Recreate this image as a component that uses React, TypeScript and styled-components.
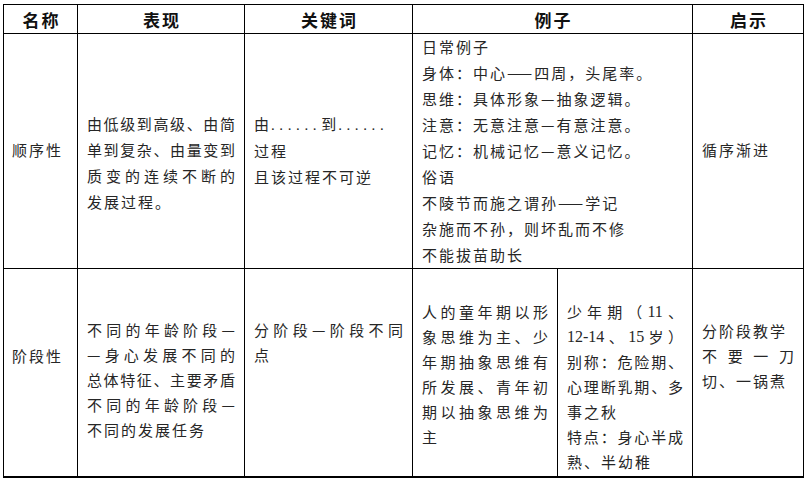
import React from "react";
import styled, { createGlobalStyle } from "styled-components";

const Global = createGlobalStyle`
  html, body { margin: 0; padding: 0; background: #fff; }
  body { font-family: "Noto Sans CJK SC", "Noto Sans", sans-serif; }
`;

const Sheet = styled.div`
  display: grid;
  grid-template-columns: 73px 166px 167px 144px 134px 110px;
  grid-template-rows: 28px 234px 207px;
  gap: 1px;
  background: #000;
  padding: 1px 1px 2px 1px;
  width: max-content;
  margin: 4px 0 0 3px;
`;

const HeadCell = styled.div<{ $span?: number }>`
  background: #fff;
  grid-column: span ${(p) => p.$span ?? 1};
  display: flex;
  align-items: center;
  justify-content: center;
  font-size: 17px;
  font-weight: 700;
  letter-spacing: 2px;
  padding-left: 2px;
  color: #111;
`;

const Cell = styled.div<{ $span?: number; $pt: number; $pl?: number; $lh: number }>`
  background: #fff;
  grid-column: span ${(p) => p.$span ?? 1};
  padding: ${(p) => p.$pt}px 9px 0 ${(p) => p.$pl ?? 9}px;
  font-size: 15px;
  line-height: ${(p) => p.$lh}px;
  color: #262626;
  overflow: hidden;
`;

const Line = styled.div`
  white-space: nowrap;
  letter-spacing: 2px;
`;

const JLine = styled.div`
  display: flex;
  justify-content: space-between;
  white-space: nowrap;
`;

const Latin = styled.span`
  font-family: "Liberation Serif", serif;
  font-size: 16px;
`;

const Dots = styled.span`
  font-family: "Liberation Serif", serif;
  letter-spacing: 4.6px;
`;

const tokens = (s: string) => s.match(/[0-9\-]+|\s+|./gu) ?? [];

const J = ({ t }: { t: string }) => (
  <JLine>
    {tokens(t)
      .filter((x) => x.trim() !== "")
      .map((x, i) =>
        /[0-9]/.test(x) ? <Latin key={i}>{x}</Latin> : <span key={i}>{x}</span>
      )}
  </JLine>
);

const L = ({ t }: { t: string }) => <Line>{t}</Line>;

export default function App() {
  return (
    <>
      <Global />
      <Sheet>
        <HeadCell>名称</HeadCell>
        <HeadCell>表现</HeadCell>
        <HeadCell>关键词</HeadCell>
        <HeadCell $span={2}>例子</HeadCell>
        <HeadCell>启示</HeadCell>

        <Cell $pt={103} $pl={8} $lh={26}>
          <L t="顺序性" />
        </Cell>
        <Cell $pt={77} $lh={26}>
          <J t="由低级到高级、由简" />
          <J t="单到复杂、由量变到" />
          <J t="质变的连续不断的" />
          <L t="发展过程。" />
        </Cell>
        <Cell $pt={77} $lh={26}>
          <Line>
            由<Dots>......</Dots>到<Dots>......</Dots>
          </Line>
          <L t="过程" />
          <L t="且该过程不可逆" />
        </Cell>
        <Cell $span={2} $pt={0} $lh={26}>
          <L t="日常例子" />
          <L t="身体：中心——四周，头尾率。" />
          <L t="思维：具体形象—抽象逻辑。" />
          <L t="注意：无意注意—有意注意。" />
          <L t="记忆：机械记忆—意义记忆。" />
          <L t="俗语" />
          <L t="不陵节而施之谓孙——学记" />
          <L t="杂施而不孙，则坏乱而不修" />
          <L t="不能拔苗助长" />
        </Cell>
        <Cell $pt={103} $lh={26}>
          <L t="循序渐进" />
        </Cell>

        <Cell $pt={74} $pl={8} $lh={25}>
          <L t="阶段性" />
        </Cell>
        <Cell $pt={48} $lh={25}>
          <J t="不同的年龄阶段—" />
          <J t="—身心发展不同的" />
          <J t="总体特征、主要矛盾" />
          <J t="不同的年龄阶段—" />
          <L t="不同的发展任务" />
        </Cell>
        <Cell $pt={48} $lh={25}>
          <J t="分阶段—阶段不同" />
          <L t="点" />
        </Cell>
        <Cell $pt={30} $lh={25}>
          <J t="人的童年期以形" />
          <J t="象思维为主、少" />
          <J t="年期抽象思维有" />
          <J t="所发展、青年初" />
          <J t="期以抽象思维为" />
          <L t="主" />
        </Cell>
        <Cell $pt={30} $lh={25}>
          <J t="少年期（11、" />
          <J t="12-14、15岁）" />
          <J t="别称：危险期、" />
          <J t="心理断乳期、多" />
          <L t="事之秋" />
          <J t="特点：身心半成" />
          <L t="熟、半幼稚" />
        </Cell>
        <Cell $pt={49} $lh={25}>
          <L t="分阶段教学" />
          <J t="不要一刀" />
          <L t="切、一锅煮" />
        </Cell>
      </Sheet>
    </>
  );
}
